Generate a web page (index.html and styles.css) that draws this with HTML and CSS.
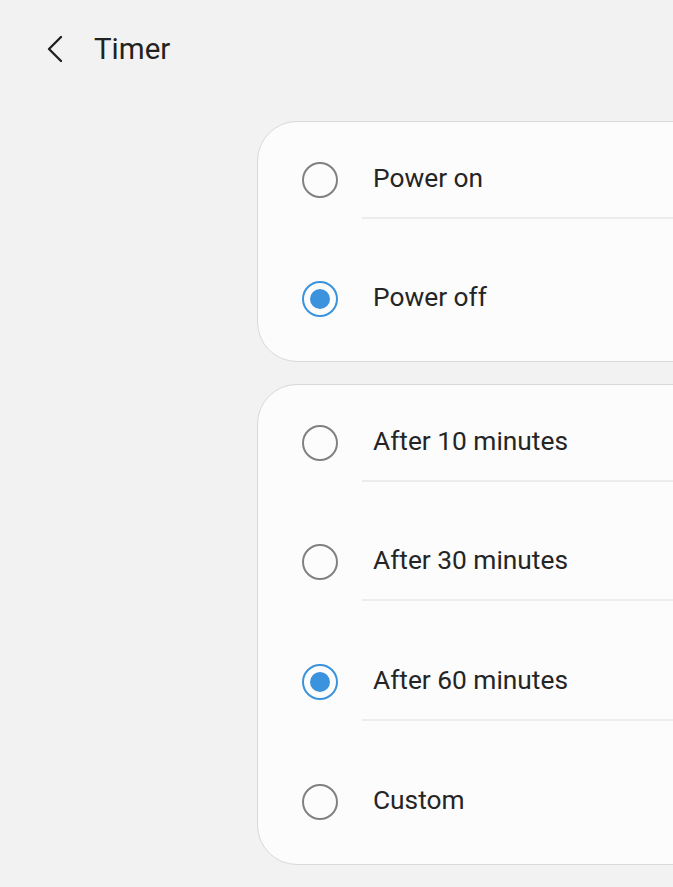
FILE: index.html
```html
<!DOCTYPE html>
<html>
<head>
<meta charset="utf-8">
<link rel="stylesheet" href="styles.css">
</head>
<body>
<div class="page">
  <header class="header">
    <svg class="back" width="18" height="28" viewBox="0 0 18 28"><path d="M15 2 L3 14 L15 26" fill="none" stroke="#222" stroke-width="2.4" stroke-linecap="round" stroke-linejoin="round"/></svg>
    <h1 class="title">Timer</h1>
  </header>
  <div class="card">
    <div class="row"><span class="radio"></span><span class="label">Power on</span></div>
    <div class="row"><span class="radio on"></span><span class="label last">Power off</span></div>
  </div>
  <div class="card">
    <div class="row"><span class="radio"></span><span class="label">After 10 minutes</span></div>
    <div class="row"><span class="radio"></span><span class="label">After 30 minutes</span></div>
    <div class="row"><span class="radio on"></span><span class="label">After 60 minutes</span></div>
    <div class="row"><span class="radio"></span><span class="label last">Custom</span></div>
  </div>
</div>
</body>
</html>
```

FILE: styles.css
```css
html, body {
  margin: 0;
  padding: 0;
  background: #f2f2f2;
  overflow: hidden;
}
body {
  font-family: Roboto, "Noto Sans", sans-serif;
  color: #252525;
  width: 673px;
  height: 887px;
}
.page {
  display: flex;
  flex-direction: column;
}
.header {
  display: flex;
  align-items: center;
  height: 97px;
  padding-left: 46px;
  box-sizing: border-box;
}
.title {
  margin: 0 0 0 30px;
  font-size: 29.5px;
  font-weight: 400;
  color: #222;
}
.card {
  margin-left: 257px;
  width: 480px;
  background: #fcfcfc;
  border: 1px solid #d9d9d9;
  border-radius: 40px;
  margin-top: 24px;
  box-sizing: border-box;
  padding-left: 44px;
}
.card + .card {
  margin-top: 22px;
}
.row {
  display: flex;
  align-items: flex-start;
  height: 120px;
  padding-top: 40px;
  box-sizing: border-box;
}
.card .row:first-child {
  height: 119px;
}
.radio {
  width: 36px;
  height: 36px;
  box-sizing: border-box;
  border: 2px solid #818181;
  border-radius: 50%;
  flex: none;
  display: flex;
  align-items: center;
  justify-content: center;
}
.radio.on {
  border: 2.5px solid #3a93dc;
}
.radio.on::after {
  content: "";
  width: 20px;
  height: 20px;
  border-radius: 50%;
  background: #3a93dc;
}
.label {
  flex: 1;
  margin-left: 24px;
  padding-left: 11px;
  height: 55px;
  line-height: 32px;
  font-size: 26.3px;
  border-bottom: 2px solid #ececec;
}
.label.last {
  border-bottom-color: transparent;
}
```
